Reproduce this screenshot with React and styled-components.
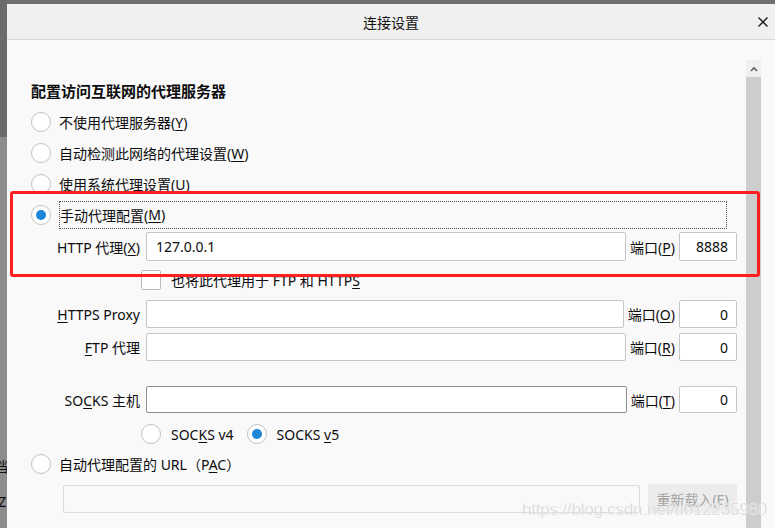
import styled, { createGlobalStyle } from "styled-components";

const Global = createGlobalStyle`
    html, body {
        margin: 0;
        padding: 0;
        background: #6e6e6e;
    }
    body {
        font-family: "Noto Sans", "Noto Sans CJK SC", sans-serif;
        font-size: 14px;
        color: #0c0c0d;
    }
`;

const Screen = styled.div`
    display: flex;
    width: 775px;
    height: 528px;
    overflow: hidden;
`;

const Backdrop = styled.div`
    width: 7px;
    flex-shrink: 0;
    display: flex;
    flex-direction: column;
    overflow: hidden;
`;

const BackdropTop = styled.div`
    height: 137px;
    background: #6b6b6b;
`;

const BackdropBottom = styled.div`
    flex: 1;
    background: #8c8c8c;
    padding-top: 319px;
    display: flex;
    flex-direction: column;
    gap: 16px;
    font-size: 14px;
    color: #111;
    white-space: nowrap;
    margin-left: -6px;
`;

const Dialog = styled.div`
    position: relative;
    width: 768px;
    margin-top: 4px;
    background: #f9f9f9;
    display: flex;
    flex-direction: column;
`;

const TitleBar = styled.header`
    height: 35px;
    flex-shrink: 0;
    background: #f0f0f0;
    border-bottom: 1px solid #d6d6d6;
    display: flex;
    align-items: center;
    justify-content: center;
    position: relative;
    font-family: "Noto Sans CJK SC", sans-serif;
    font-size: 14px;
    color: #111;
`;

const CloseButton = styled.button`
    position: absolute;
    right: 6px;
    top: 12px;
    width: 12px;
    height: 12px;
    padding: 0;
    border: none;
    background: none;
    display: flex;
`;

const Body = styled.div`
    flex: 1;
    display: flex;
`;

const Content = styled.div`
    width: 706px;
    padding: 41px 0 0 24px;
    margin-right: 9px;
    display: flex;
    flex-direction: column;
`;

const Scrollbar = styled.div`
    width: 15px;
    margin-top: 20px;
    display: flex;
    flex-direction: column;
`;

const ScrollUp = styled.div`
    height: 17px;
    background: #f0f0f0;
    display: flex;
    align-items: center;
    justify-content: center;
`;

const ScrollTrack = styled.div`
    flex: 1;
    background: #cdcdcd;
`;

const Heading = styled.h2`
    margin: 0 0 5px;
    font-size: 15px;
    line-height: 20px;
    font-weight: bold;
    font-family: "Noto Sans CJK SC", sans-serif;
`;

const RadioRow = styled.label`
    display: flex;
    align-items: center;
    height: ${({ h }) => h || 31}px;
    margin-top: ${({ mt }) => mt || 0}px;
    gap: ${({ gap }) => gap || 8}px;
`;

const Radio = styled.span`
    width: 18px;
    height: 18px;
    flex-shrink: 0;
    border: 1px solid #c2c2c2;
    border-radius: 50%;
    background: #fff;
    display: flex;
    align-items: center;
    justify-content: center;

    &::after {
        content: "";
        width: 10px;
        height: 10px;
        border-radius: 50%;
        background: ${({ checked }) => (checked ? "#1c86d8" : "transparent")};
    }
`;

const Text = styled.span`
    white-space: nowrap;
`;

const FocusLabel = styled.span`
    flex: 1;
    height: 26px;
    margin-right: 10px;
    border: 1px dotted #555;
    display: flex;
    align-items: center;
    white-space: nowrap;
`;

const RadioGroup = styled.div`
    display: flex;
    align-items: center;
    gap: 13px;
    padding-left: 110px;
    margin-top: 11px;
    height: 20px;
`;

const Field = styled.div`
    display: flex;
    align-items: center;
    height: ${({ h }) => h || 28}px;
    margin-top: ${({ mt }) => mt || 0}px;
    gap: 4px;
`;

const FieldLabel = styled.span`
    width: 109px;
    margin-right: 2px;
    text-align: right;
    white-space: nowrap;
`;

const TextInput = styled.div`
    flex: 1;
    height: 100%;
    box-sizing: border-box;
    background: #fff;
    border: 1px solid ${({ dark }) => (dark ? "#8f8f8f" : "#c6c6c6")};
    border-radius: 2px;
    display: flex;
    align-items: center;
    padding: 0 9px;
`;

const PortLabel = styled.span`
    white-space: nowrap;
`;

const PortInput = styled.div`
    width: 58px;
    height: 100%;
    box-sizing: border-box;
    background: #fff;
    border: 1px solid #c6c6c6;
    border-radius: 2px;
    display: flex;
    align-items: center;
    justify-content: flex-end;
    padding: 0 8px;
`;

const CheckRow = styled.label`
    display: flex;
    align-items: center;
    gap: 10px;
    height: 20px;
    margin-top: 9px;
    padding-left: 110px;
`;

const Checkbox = styled.span`
    width: 18px;
    height: 18px;
    flex-shrink: 0;
    border: 1px solid #bcbcbc;
    border-radius: 2px;
    background: #fff;
`;

const UrlRow = styled.div`
    display: flex;
    align-items: center;
    gap: 8px;
    height: 29px;
    margin-top: 10px;
    padding-left: 32px;
`;

const UrlInput = styled.div`
    flex: 1;
    height: 28px;
    box-sizing: border-box;
    border: 1px solid #dcdcdc;
    border-radius: 2px;
    background: #f9f9f9;
`;

const ReloadButton = styled.button`
    width: 89px;
    height: 29px;
    border: none;
    border-radius: 2px;
    background: #ececec;
    color: #a3a3a3;
    font: inherit;
    font-size: 14px;
    padding: 0;
`;

const U = styled.u`
    text-decoration: underline;
    text-underline-offset: 2px;
`;

const Annotation = styled.div`
    position: absolute;
    left: 3px;
    top: 187px;
    width: 744px;
    height: 80px;
    border: 3px solid #ff1f1f;
    border-radius: 3px;
    pointer-events: none;
`;

const Watermark = styled.div`
    position: absolute;
    right: 8px;
    bottom: 8px;
    font-family: "Liberation Sans", Arial, sans-serif;
    font-size: 17px;
    color: rgba(205, 205, 205, 0.9);
    -webkit-text-stroke: 0.4px rgba(255, 255, 255, 0.9);
    letter-spacing: -0.2px;
    pointer-events: none;
`;

const Option = ({ checked, children, ...rest }) => (
    <RadioRow {...rest}>
        <Radio checked={checked} />
        <Text>{children}</Text>
    </RadioRow>
);

const ProxyField = ({ label, value, port, portKey, dark, h, mt }) => (
    <Field h={h} mt={mt}>
        <FieldLabel>{label}</FieldLabel>
        <TextInput dark={dark}>{value}</TextInput>
        <PortLabel>端口(<U>{portKey}</U>)</PortLabel>
        <PortInput>{port}</PortInput>
    </Field>
);

export default function App() {
    return (
        <Screen>
            <Global />
            <Backdrop>
                <BackdropTop />
                <BackdropBottom>
                    <span>档</span>
                    <span>(Z</span>
                </BackdropBottom>
            </Backdrop>
            <Dialog>
                <TitleBar>
                    连接设置
                    <CloseButton aria-label="close">
                        <svg width="12" height="12" viewBox="0 0 12 12">
                            <path d="M1.5 1.5 L10.5 10.5 M10.5 1.5 L1.5 10.5" stroke="#1a1a1a" strokeWidth="1.4" />
                        </svg>
                    </CloseButton>
                </TitleBar>
                <Body>
                    <Content>
                        <Heading>配置访问互联网的代理服务器</Heading>
                        <Option>不使用代理服务器(<U>Y</U>)</Option>
                        <Option>自动检测此网络的代理设置(<U>W</U>)</Option>
                        <Option>使用系统代理设置(<U>U</U>)</Option>
                        <RadioRow>
                            <Radio checked />
                            <FocusLabel>手动代理配置(<U>M</U>)</FocusLabel>
                        </RadioRow>
                        <ProxyField
                            label={<>HTTP 代理(<U>X</U>)</>}
                            value="127.0.0.1"
                            port="8888"
                            portKey="P"
                            h={29}
                            mt={2}
                        />
                        <CheckRow>
                            <Checkbox />
                            <Text>也将此代理用于 FTP 和 HTTP<U>S</U></Text>
                        </CheckRow>
                        <ProxyField label={<><U>H</U>TTPS Proxy</>} port="0" portKey="O" mt={10} />
                        <ProxyField label={<><U>F</U>TP 代理</>} port="0" portKey="R" mt={5} />
                        <ProxyField label={<>SO<U>C</U>KS 主机</>} port="0" portKey="T" dark mt={25} h={27} />
                        <RadioGroup>
                            <Option h={20} gap={10}>SOC<U>K</U>S v4</Option>
                            <Option h={20} gap={10} checked>SOCKS <U>v</U>5</Option>
                        </RadioGroup>
                        <Option h={20} mt={10}>
                            自动代理配置的 URL（P<U>A</U>C）
                        </Option>
                        <UrlRow>
                            <UrlInput />
                            <ReloadButton disabled>重新载入(E)</ReloadButton>
                        </UrlRow>
                    </Content>
                    <Scrollbar>
                        <ScrollUp>
                            <svg width="8" height="6" viewBox="0 0 8 6">
                                <path d="M1 5 L4 1.8 L7 5" stroke="#555" strokeWidth="1.4" fill="none" />
                            </svg>
                        </ScrollUp>
                        <ScrollTrack />
                    </Scrollbar>
                </Body>
                <Annotation />
                <Watermark>https://blog.csdn.net/u012235980</Watermark>
            </Dialog>
        </Screen>
    );
}
